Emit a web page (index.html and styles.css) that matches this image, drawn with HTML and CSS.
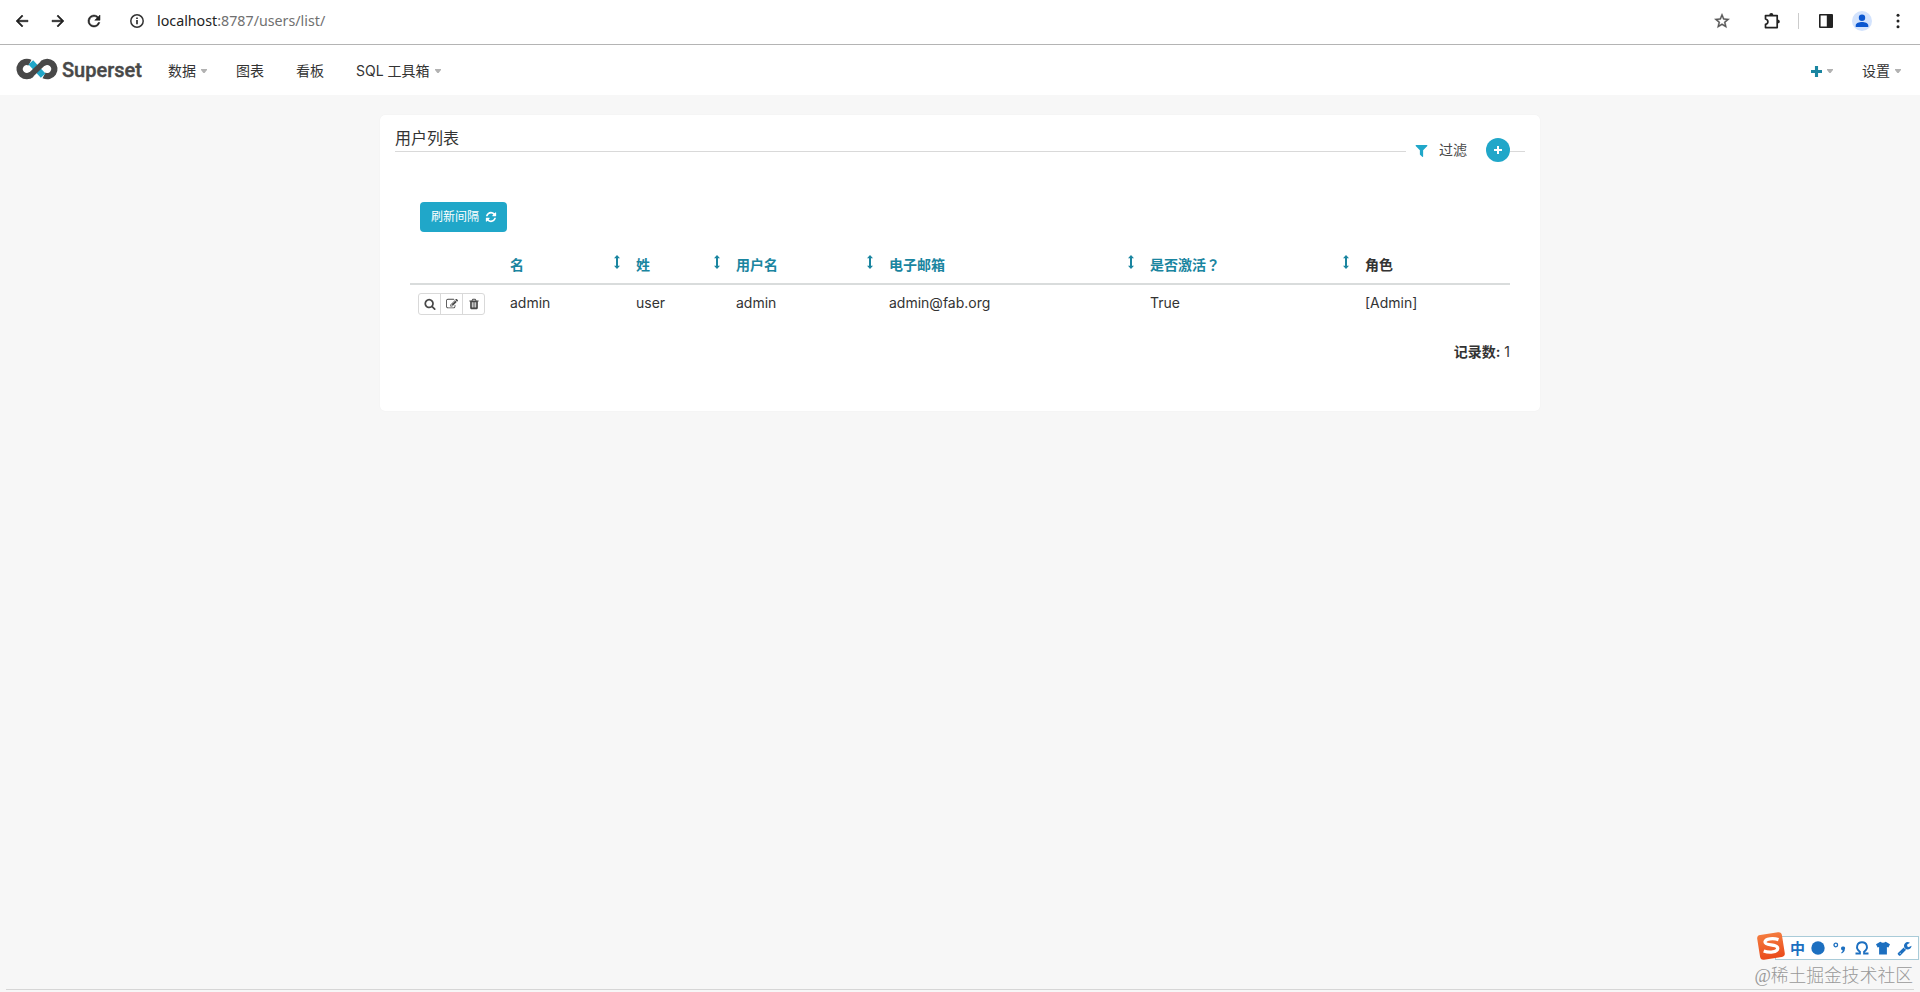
FILE: index.html
```html
<!DOCTYPE html>
<html lang="zh-CN">
<head>
<meta charset="utf-8">
<title>用户列表</title>
<link rel="stylesheet" href="styles.css">
</head>
<body>
<svg width="0" height="0" class="defs">
  <symbol id="sort" viewBox="0 0 6 14"><path d="M3 0 6 3.200H4v7.600h2L3 14 0 10.800h2V3.200H0z"/></symbol>
  <symbol id="caret" viewBox="0 0 6 4"><path d="M0 0h6v1L3.600 4H2.400L0 1z"/></symbol>
</svg>
<header class="browser">
  <svg class="b-icon back" viewBox="0 0 24 24"><path d="M20 11H7.830l5.590-5.590L12 4l-8 8 8 8 1.410-1.410L7.830 13H20z" stroke="#222" stroke-width=".7"/></svg>
  <svg class="b-icon fwd" viewBox="0 0 24 24"><path d="M4 11h12.170l-5.590-5.590L12 4l8 8-8 8-1.410-1.410L16.170 13H4z" stroke="#222" stroke-width=".7"/></svg>
  <svg class="b-icon reload" viewBox="0 0 24 24"><path d="M17.650 6.350A7.960 7.960 0 0 0 12 4a8 8 0 1 0 7.730 10h-2.080A6 6 0 1 1 12 6c1.660 0 3.140.69 4.220 1.780L13 11h7V4z" stroke="#222" stroke-width=".7"/></svg>
  <svg class="b-icon info" viewBox="0 0 16 16"><circle cx="8" cy="8" r="6.200" fill="none" stroke="#333" stroke-width="1.500"/><path d="M7.200 7h1.600v4.300H7.200zM7.200 4.500h1.600v1.600H7.200z"/></svg>
  <span class="url">localhost<span class="path">:8787/users/list/</span></span>
  <svg class="b-icon star" viewBox="0 0 24 24"><path fill="#555" stroke="#555" stroke-width=".5" d="M22 9.240l-7.190-.62L12 2 9.190 8.630 2 9.240l5.460 4.730L5.820 21 12 17.270 18.180 21l-1.630-7.030zM12 15.400l-3.760 2.270 1-4.280-3.320-2.880 4.380-.38L12 6.100l1.710 4.040 4.380.38-3.320 2.880 1 4.280z"/></svg>
  <svg class="b-icon puzzle" viewBox="0 0 18 18"><path fill="none" stroke="#222" stroke-width="1.700" stroke-linejoin="round" d="M2.500 3.600h11.700v12H2.500v-3.200c3.200-.6 3.200-4.800 0-5.400z"/><path d="M6.200 3.400a2.100 2.300 0 0 1 4.200 0zM14.500 7.400a2.300 2.100 0 0 1 0 4.200z"/></svg>
  <i class="divider"></i>
  <svg class="b-icon panel" viewBox="0 0 16 16"><path fill-rule="evenodd" d="M2 1h12q1 0 1 1v12q0 1-1 1H2q-1 0-1-1V2q0-1 1-1zm.600 1.600v10.800h6.200V2.600z"/></svg>
  <svg class="b-icon profile" viewBox="0 0 20 20"><circle cx="10" cy="10" r="10" fill="#d3e3fd"/><path fill="#0b57d0" d="M10 10a3.200 3.200 0 1 0 0-6.400A3.200 3.200 0 0 0 10 10zm-6.300 6v-1.600c0-2.200 3.600-3.400 6.300-3.400s6.300 1.200 6.300 3.400V16z"/></svg>
  <svg class="b-icon dots" viewBox="0 0 4 16"><circle cx="2" cy="2.300" r="1.500"/><circle cx="2" cy="8" r="1.500"/><circle cx="2" cy="13.700" r="1.500"/></svg>
</header>
<nav class="nav">
  <a class="brand">
    <svg class="logo" viewBox="0 0 42 22"><g fill="none" stroke="#484848" stroke-width="6.400"><path d="M14 4.700A7.100 7.100 0 1 0 15.500 16.300M26.500 5.700A7.100 7.100 0 1 1 28 17.300"/><path stroke="#20a7c9" d="M14.800 4.300 27.200 17.700"/><path stroke-width="5.800" d="M27.800 4.500 14.200 17.500"/></g></svg>
    <span class="brand-name">Superset</span>
  </a>
  <a class="item data">数据<svg class="caret"><use href="#caret"/></svg></a>
  <a class="item charts">图表</a>
  <a class="item boards">看板</a>
  <a class="item">SQL 工具箱<svg class="caret sql"><use href="#caret"/></svg></a>
  <a class="item add"><svg class="plus" viewBox="0 0 12 12"><path d="M4.300 0h3.400v4.300H12v3.400H7.700V12H4.300V7.700H0V4.300h4.300z"/></svg><svg class="caret"><use href="#caret"/></svg></a>
  <a class="item settings">设置<svg class="caret"><use href="#caret"/></svg></a>
</nav>
<main class="card">
  <div class="heading">
    <h1 class="title">用户列表</h1>
    <div class="tools">
      <svg class="filter" viewBox="128 128 1536 1536"><path d="M1595 295q17 41-14 70l-493 493v742q0 42-39 59-13 5-25 5-27 0-45-19l-256-256q-19-19-19-45v-486l-493-493q-31-29-14-70 17-39 59-39h1280q42 0 59 39z"/></svg>
      <span class="filter-text">过滤</span>
      <a class="round"><svg viewBox="0 0 8 8"><path d="M3 0h2v3h3v2H5v3H3V5H0V3h3z"/></svg></a>
    </div>
  </div>
  <a class="refresh">刷新间隔<svg viewBox="0 0 1792 1792"><path d="M1639 1056q0 5-1 7-64 268-268 434.500t-478 166.500q-146 0-282.500-55t-243.500-157l-129 129q-19 19-45 19t-45-19-19-45v-448q0-26 19-45t45-19h448q26 0 45 19t19 45-19 45l-137 137q71 66 161 102t187 36q134 0 250-65t186-179q11-17 53-117 8-23 30-23h192q13 0 22.500 9.500t9.500 22.500zm25-800v448q0 26-19 45t-45 19h-448q-26 0-45-19t-19-45 19-45l138-138q-148-137-349-137-134 0-250 65t-186 179q-11 17-53 117-8 23-30 23h-199q-13 0-22.500-9.500t-9.500-22.500v-7q65-268 270-434.500t480-166.500q146 0 284 55.500t245 156.500l130-129q19-19 45-19t45 19 19 45z"/></svg></a>
  <table class="users">
    <colgroup><col class="c1"><col class="c2"><col class="c3"><col class="c4"><col class="c5"><col class="c6"><col class="c7"></colgroup>
    <thead><tr>
      <th></th>
      <th><a class="sort">名<svg><use href="#sort"/></svg></a></th>
      <th><a class="sort">姓<svg><use href="#sort"/></svg></a></th>
      <th><a class="sort">用户名<svg><use href="#sort"/></svg></a></th>
      <th><a class="sort">电子邮箱<svg><use href="#sort"/></svg></a></th>
      <th><a class="sort"><span>是否激活<span class="mark" lang="zh-TW">？</span></span><svg><use href="#sort"/></svg></a></th>
      <th>角色</th>
    </tr></thead>
    <tbody><tr>
      <td><div class="actions">
        <a><svg viewBox="0 0 1792 1792"><path d="M1216 832q0-185-131.500-316.500t-316.500-131.500-316.500 131.500-131.500 316.500 131.500 316.500 316.500 131.500 316.500-131.500 131.500-316.500zm512 832q0 52-38 90t-90 38q-54 0-90-38l-343-342q-179 124-399 124-143 0-273.500-55.500t-225-150-150-225-55.500-273.500 55.500-273.500 150-225 225-150 273.500-55.500 273.500 55.500 225 150 150 225 55.500 273.500q0 220-124 399l343 343q37 37 37 90z"/></svg></a>
        <a><svg viewBox="0 0 1792 1792"><path d="M888 1184l116-116-152-152-116 116v56h96v96h56zm440-720q-16-16-33 1l-350 350q-17 17-1 33t33-1l350-350q17-17 1-33zm80 594v190q0 119-84.500 203.500t-203.500 84.500h-832q-119 0-203.500-84.500t-84.500-203.500v-832q0-119 84.500-203.500t203.500-84.500h832q63 0 117 25 15 7 18 23 3 17-9 29l-49 49q-14 14-32 8-23-6-45-6h-832q-66 0-113 47t-47 113v832q0 66 47 113t113 47h832q66 0 113-47t47-113v-126q0-13 9-22l64-64q15-15 35-7t20 29zm-96-738l288 288-672 672h-288v-288zm444 132l-92 92-288-288 92-92q28-28 68-28t68 28l152 152q28 28 28 68t-28 68z"/></svg></a>
        <a><svg viewBox="0 0 1792 1792"><path d="M704 1376v-704q0-14-9-23t-23-9h-64q-14 0-23 9t-9 23v704q0 14 9 23t23 9h64q14 0 23-9t9-23zm256 0v-704q0-14-9-23t-23-9h-64q-14 0-23 9t-9 23v704q0 14 9 23t23 9h64q14 0 23-9t9-23zm256 0v-704q0-14-9-23t-23-9h-64q-14 0-23 9t-9 23v704q0 14 9 23t23 9h64q14 0 23-9t9-23zm-544-992h448l-48-117q-7-9-17-11h-317q-10 2-17 11zm928 32v64q0 14-9 23t-23 9h-96v948q0 83-47 143.500t-113 60.500h-832q-66 0-113-58.500t-47-141.500v-952h-96q-14 0-23-9t-9-23v-64q0-14 9-23t23-9h309l70-167q15-37 54-63t79-26h320q40 0 79 26t54 63l70 167h309q14 0 23 9t9 23z"/></svg></a>
      </div></td>
      <td>admin</td><td>user</td><td>admin</td><td>admin@fab.org</td><td>True</td><td>[Admin]</td>
    </tr></tbody>
  </table>
  <p class="count"><strong>记录数:</strong> 1</p>
</main>
<div class="bottom-line"></div>
<aside class="ime">
  <div class="ime-bar">
    <span class="zh">中</span>
    <svg class="i-dot" viewBox="0 0 14 14"><circle cx="7" cy="7" r="6.700"/></svg>
    <svg class="i-punct" viewBox="0 0 13 14"><circle cx="2.800" cy="4" r="1.800" fill="none" stroke="#1c6fc0" stroke-width="1.300"/><path d="M8 7.500a2 2 0 1 1 3.800.8c0 2-1.300 3.500-3.200 4.200l-.4-1c1-.5 1.500-1.200 1.500-2A2 2 0 0 1 8 7.500z"/></svg>
    <svg class="i-omega" viewBox="0 0 14 14"><path fill="none" stroke="#1c6fc0" stroke-width="1.900" d="M.500 12.500h4.400v-1.800C0 7.500 2 1.300 7 1.300s7 6.200 2.100 9.400v1.800h4.400"/></svg>
    <svg class="i-shirt" viewBox="0 0 14 14"><path d="M4.300.800q2.700 2 5.400 0L14 3.200 12.400 6.600 10.900 6v7.400H3.100V6l-1.500.600L0 3.200z"/></svg>
    <svg class="i-wrench" viewBox="0 0 1792 1792"><path d="M448 1472q0-26-19-45t-45-19-45 19-19 45 19 45 45 19 45-19 19-45zm644-420l-682 682q-37 37-90 37-52 0-91-37l-106-108q-38-36-38-90 0-53 38-91l681-681q39 98 114.500 173.500t173.500 114.500zm634-435q0 39-23 106-47 134-164.500 217.500t-258.500 83.500q-185 0-316.500-131.500t-131.500-316.500 131.500-316.500 316.500-131.500q58 0 121.500 16.500t107.500 46.500q16 11 16 28t-16 28l-293 169v224l193 107q5-3 79-48.500t135.500-81 70.500-35.500q15 0 23.500 10t8.500 25z"/></svg>
  </div>
  <svg class="sogou" viewBox="0 0 28 28"><defs><linearGradient id="og" x1="0" y1="0" x2="0" y2="1"><stop offset="0" stop-color="#f47b3e"/><stop offset="1" stop-color="#ea4b1c"/></linearGradient></defs><rect x="1.500" y="1.500" width="25" height="25" rx="3.500" fill="url(#og)" transform="rotate(-9 14 14)"/><path d="M21.500 7.600c-5-1.600-13.200-1.300-13.500 2.400-.3 4 13 1.800 12.700 6.400-.3 4-8.500 4.600-14 2.600" fill="none" stroke="#fff" stroke-width="3.300"/></svg>
</aside>
<div class="watermark">@稀土掘金技术社区</div>
</body>
</html>
```
FILE: styles.css
```css
* { box-sizing: border-box; }
body {
  margin: 0;
  height: 992px;
  overflow: hidden;
  background: #f7f7f7;
  color: #333;
  font: 14px/20px Inter, "Noto Sans CJK SC", sans-serif;
}
svg { display: block; flex: none; }
.defs { position: absolute; }

.browser {
  display: flex;
  align-items: center;
  height: 45px;
  padding: 0 20px 3px 13px;
  background: #fff;
  border-bottom: 1px solid #b4b4b4;
  fill: #222;
}
.back, .fwd, .reload { width: 18px; height: 18px; }
.fwd { margin-left: 18px; }
.reload { margin-left: 18px; }
.info { width: 16px; height: 16px; margin-left: 26px; }
.url { margin: 1px 0 0 12px; font: 14.25px/20px "Noto Sans", sans-serif; color: #222; }
.path { color: #707070; }
.star { width: 18px; height: 18px; margin-left: auto; }
.puzzle { width: 18px; height: 18px; margin-left: 32px; }
.divider { width: 1px; height: 16px; margin-left: 17px; background: #ccc; }
.panel { width: 16px; height: 16px; margin-left: 19px; }
.profile { width: 20px; height: 20px; margin-left: 18px; }
.dots { width: 4px; height: 16px; margin-left: 24px; }

.nav {
  display: flex;
  align-items: center;
  height: 50px;
  padding: 2px 19px 0 16px;
  background: #fff;
}
.brand { display: flex; align-items: center; width: 152px; height: 48px; }
.logo { width: 42px; height: 22px; margin-top: -4px; }
.brand-name { margin: -3px 0 0 4px; font: 500 20px/24px Roboto, sans-serif; color: #484848; -webkit-text-stroke: .4px #484848; }
.item { display: flex; align-items: center; white-space: pre; }
.caret { width: 6px; height: 4px; margin-left: 5px; fill: #b2b2b2; }
.data { width: 68px; }
.charts, .boards { width: 60px; }
.add { margin-left: auto; }
.plus { width: 11px; height: 11px; fill: #1a85a0; }
.settings { margin-left: 29px; }

.card {
  width: 1160px;
  height: 296px;
  margin: 20px auto 0;
  padding: 0 15px;
  border-radius: 5px;
  background: #fff;
  box-shadow: 0 0 1px #e8e8e8;
}
.heading { display: flex; height: 37px; border-bottom: 1px solid #d9d9d9; }
.title { margin: 12px 0 0; font-size: 16px; line-height: 22px; font-weight: 400; }
.tools {
  display: flex;
  align-items: center;
  width: 104px;
  height: 26px;
  margin: 22px 15px 0 auto;
  padding-left: 9px;
  background: #fff;
}
.filter { width: 13px; height: 13px; fill: #20a7c9; }
.filter-text { margin-left: 11px; color: #484848; }
.round { display: flex; align-items: center; justify-content: center; width: 24px; height: 24px; margin-left: auto; border-radius: 50%; background: #20a7c9; }
.round svg { width: 8px; height: 8px; fill: #fff; }
.refresh {
  display: flex;
  align-items: center;
  width: 87px;
  height: 30px;
  margin: 50px 0 0 25px;
  padding-left: 11px;
  border-radius: 4px;
  background: #20a7c9;
  color: #fff;
  font-size: 12px;
}
.refresh svg { width: 12px; height: 12px; margin-left: 6px; fill: #fff; }

.users { width: 1100px; margin: 13px 0 0 15px; table-layout: fixed; border-collapse: separate; border-spacing: 0; }
.c1 { width: 92px; } .c2 { width: 126px; } .c3 { width: 100px; } .c4 { width: 153px; }
.c5 { width: 261px; } .c6 { width: 215px; } .c7 { width: 153px; }
.users th { height: 40px; padding: 1px 8px 0; border-bottom: 2px solid #d9dcdc; text-align: left; font-weight: 700; }
.users td { height: 40px; padding: 8px 8px 0; vertical-align: top; }
.sort { display: flex; align-items: flex-start; justify-content: space-between; color: #1a85a0; }
.sort svg { width: 6px; height: 14px; fill: #1a85a0; }
.mark { font-family: "Noto Sans CJK TC", sans-serif; line-height: 1; }
.actions { display: flex; width: 67px; height: 22px; border: 1px solid #d9d9d9; border-radius: 3px; }
.actions a { display: flex; flex: 1; align-items: center; justify-content: center; }
.actions a + a { border-left: 1px solid #d9d9d9; }
.actions svg { width: 12px; height: 12px; fill: #484848; }
.count { margin: 17px 15px 0 0; text-align: right; }

.bottom-line { height: 1px; margin: 578px 6px 0; background: #d6d6d6; }
.ime { position: absolute; right: 1px; top: 933px; width: 162px; height: 28px; }
.ime-bar {
  display: flex;
  align-items: center;
  height: 24px;
  margin: 3px 0 0 18px;
  padding-left: 14px;
  border: 1px solid #a9cbd8;
  background: #fff;
  fill: #1c6fc0;
}
.zh { width: 15px; font: 700 15px/20px "Noto Sans CJK SC", sans-serif; color: #1c6fc0; }
.i-dot { width: 14px; height: 14px; margin-left: 6px; }
.i-punct { width: 13px; height: 14px; margin-left: 8px; }
.i-omega { width: 14px; height: 14px; margin-left: 9px; }
.i-shirt { width: 14px; height: 14px; margin-left: 7px; }
.i-wrench { width: 15px; height: 15px; margin-left: 7px; }
.sogou { position: absolute; left: 0; top: -1px; width: 28px; height: 28px; }
.watermark { position: absolute; right: 7px; top: 963px; font: 300 17.8px/26px "Liberation Serif", "Noto Sans CJK SC", sans-serif; color: #999; white-space: nowrap; }
```
